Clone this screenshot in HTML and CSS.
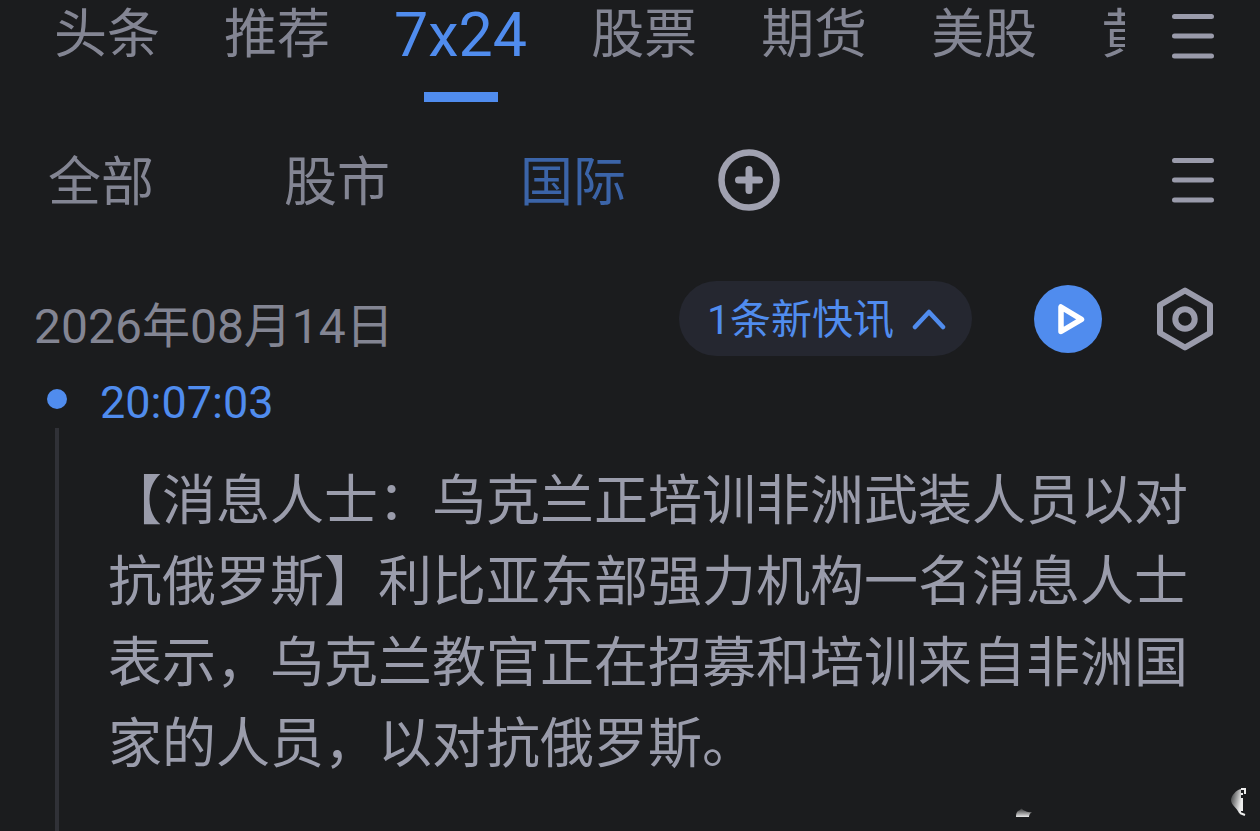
FILE: index.html
```html
<!DOCTYPE html>
<html lang="zh-CN">
<head>
    <meta charset="UTF-8">
    <meta name="viewport" content="width=device-width, initial-scale=1.0">
    <title>7x24 快讯</title>
    <link rel="stylesheet" href="styles.css">
</head>
<body>
    <header class="topbar">
        <nav class="tabs">
            <a href="#">头条</a>
            <a href="#">推荐</a>
            <a href="#" class="active">7x24</a>
            <a href="#">股票</a>
            <a href="#">期货</a>
            <a href="#">美股</a>
            <a href="#">黄金</a>
        </nav>
        <button type="button" class="icon-btn" aria-label="菜单">
            <svg width="42" height="46" viewBox="0 0 42 46">
                <path d="M2.5 3.5h37M2.5 23h37M2.5 43h37" stroke="#9a9bab" stroke-width="5" stroke-linecap="round"/>
            </svg>
        </button>
    </header>

    <div class="filters">
        <nav class="filter-list">
            <a href="#">全部</a>
            <a href="#">股市</a>
            <a href="#" class="selected">国际</a>
        </nav>
        <button type="button" class="icon-btn add" aria-label="添加">
            <svg width="62" height="62" viewBox="0 0 62 62" fill="none" stroke="#a0a1b0">
                <circle cx="31" cy="31" r="27.5" stroke-width="6.5"/>
                <path d="M31 20.5v21M20.5 31h21" stroke-width="7" stroke-linecap="round"/>
            </svg>
        </button>
        <button type="button" class="icon-btn" aria-label="列表">
            <svg width="42" height="46" viewBox="0 0 42 46">
                <path d="M2.5 3.5h37M2.5 23h37M2.5 43h37" stroke="#9a9bab" stroke-width="5" stroke-linecap="round"/>
            </svg>
        </button>
    </div>

    <div class="datebar">
        <h1 class="date">2026年08月14日</h1>
        <button type="button" class="new-pill">
            1条新快讯
            <svg width="34" height="22" viewBox="0 0 34 22" fill="none">
                <path d="M3 18L17 3l14 15" stroke="#508cee" stroke-width="4.5" stroke-linecap="round" stroke-linejoin="round"/>
            </svg>
        </button>
        <button type="button" class="icon-btn play" aria-label="播放">
            <svg width="68" height="68" viewBox="0 0 68 68">
                <circle cx="34" cy="34" r="34" fill="#508cee"/>
                <path d="M27 22v24.500L47.500 34.300z" fill="none" stroke="#fff" stroke-width="5.500" stroke-linejoin="round"/>
            </svg>
        </button>
        <button type="button" class="icon-btn" aria-label="设置">
            <svg width="58" height="64" viewBox="0 0 58 64" fill="none" stroke="#9a9bab" stroke-width="6">
                <path d="M29 3.500l25 14.500v28L29 60.500 4 46v-28z" stroke-linejoin="round"/>
                <circle cx="29" cy="32" r="9.700"/>
            </svg>
        </button>
    </div>

    <main class="timeline">
        <div class="rail">
            <span class="dot"></span>
            <span class="line"></span>
        </div>
        <article class="news">
            <time class="time" datetime="2026-08-14T20:07:03">20:07:03</time>
            <p class="text">【消息人士：乌克兰正培训非洲武装人员以对抗俄罗斯】利比亚东部强力机构一名消息人士表示，乌克兰教官正在招募和培训来自非洲国家的人员，以对抗俄罗斯。</p>
        </article>
    </main>

    <svg class="mark" width="240" height="36" viewBox="0 0 240 36" aria-hidden="true">
        <defs>
            <linearGradient id="fadeDown" x1="0" y1="0" x2="0" y2="1">
                <stop offset="0" stop-color="#fff" stop-opacity="0.100"/>
                <stop offset="1" stop-color="#fff" stop-opacity="0.900"/>
            </linearGradient>
            <linearGradient id="fadeRight" x1="0" y1="0" x2="1" y2="0.500">
                <stop offset="0" stop-color="#fff" stop-opacity="0.100"/>
                <stop offset="1" stop-color="#fff" stop-opacity="0.900"/>
            </linearGradient>
        </defs>
        <path d="M8 32c0-4 1-6 4-7 1-2 2-2 3 0 3 1 5 3 9 2-2 1-3 3-3 5z" fill="url(#fadeDown)"/>
        <path d="M233 4c-5 1-10 7-10 11 0 5 6 8 8 13l2 1z" fill="url(#fadeRight)"/>
        <path d="M233 4h4v5M234 8v2M234 13v13M232 28l5 2" fill="none" stroke="#eee" stroke-width="2"/>
    </svg>
</body>
</html>
```
FILE: styles.css
```css
* {
    box-sizing: border-box;
}

body {
    margin: 0;
    min-height: 100vh;
    display: flex;
    flex-direction: column;
    position: relative;
    background-color: #1b1c1e;
    color: #838593;
    font-family: Roboto, "Noto Sans CJK SC", sans-serif;
    text-spacing-trim: space-all;
}

a {
    color: inherit;
    text-decoration: none;
    white-space: nowrap;
}

.icon-btn {
    display: flex;
    flex-shrink: 0;
    padding: 0;
    border: none;
    background: none;
    cursor: pointer;
}

/* top tabs */
.topbar {
    display: flex;
    align-items: flex-start;
    gap: 47px;
    padding-right: 46px;
}

.topbar .icon-btn {
    margin-top: 13px;
}

.tabs {
    flex: 1;
    min-width: 0;
    display: flex;
    gap: 64px;
    height: 102px;
    padding-left: 54px;
    overflow-x: clip;
    font-size: 53px;
    line-height: 70px;
}

.tabs a {
    flex-shrink: 0;
}

.tabs .active {
    display: flex;
    flex-direction: column;
    align-items: center;
    justify-content: space-between;
    color: #508cee;
    font-size: 61px;
}

.tabs .active::after {
    content: "";
    width: 74px;
    height: 10px;
    background: #508cee;
}

/* second row */
.filters {
    display: flex;
    align-items: center;
    height: 156px;
    padding: 0 46px 0 48px;
    font-size: 53px;
    line-height: 70px;
}

.filter-list {
    display: flex;
    gap: 130px;
    padding-top: 6px;
}

.filter-list .selected {
    color: #3b64a8;
}

.add {
    margin-left: 92px;
    margin-right: auto;
}

/* date and actions */
.datebar {
    display: flex;
    align-items: center;
    margin-top: 23px;
    padding: 0 46px 0 34px;
}

.date {
    align-self: flex-end;
    margin: 0 auto 0 0;
    font-size: 48px;
    font-weight: 400;
    line-height: 58px;
}

.new-pill {
    display: flex;
    align-items: center;
    gap: 18px;
    padding: 3px 26px 0 28px;
    border: none;
    border-radius: 38px;
    background: #252730;
    color: #508cee;
    font-family: inherit;
    font-size: 41px;
    line-height: 72px;
    cursor: pointer;
}

.play {
    margin: 0 54px 0 62px;
}

/* timeline */
.timeline {
    flex: 1;
    display: flex;
}

.rail {
    flex: 0 0 100px;
    display: flex;
    flex-direction: column;
    gap: 19px;
    padding: 33px 0 0 47px;
}

.dot {
    width: 20px;
    height: 20px;
    border-radius: 50%;
    background: #508cee;
}

.line {
    flex: 1;
    width: 4px;
    margin-left: 8px;
    background: #303137;
}

.news {
    flex: 1;
    padding: 17px 64px 40px 0;
}

.time {
    display: block;
    color: #508cee;
    font-size: 45px;
    line-height: 60px;
}

.text {
    margin: 28px 0 0 8px;
    color: #9a9cab;
    font-size: 54px;
    line-height: 81px;
}

.mark {
    position: absolute;
    right: 12px;
    bottom: 10px;
}
```
